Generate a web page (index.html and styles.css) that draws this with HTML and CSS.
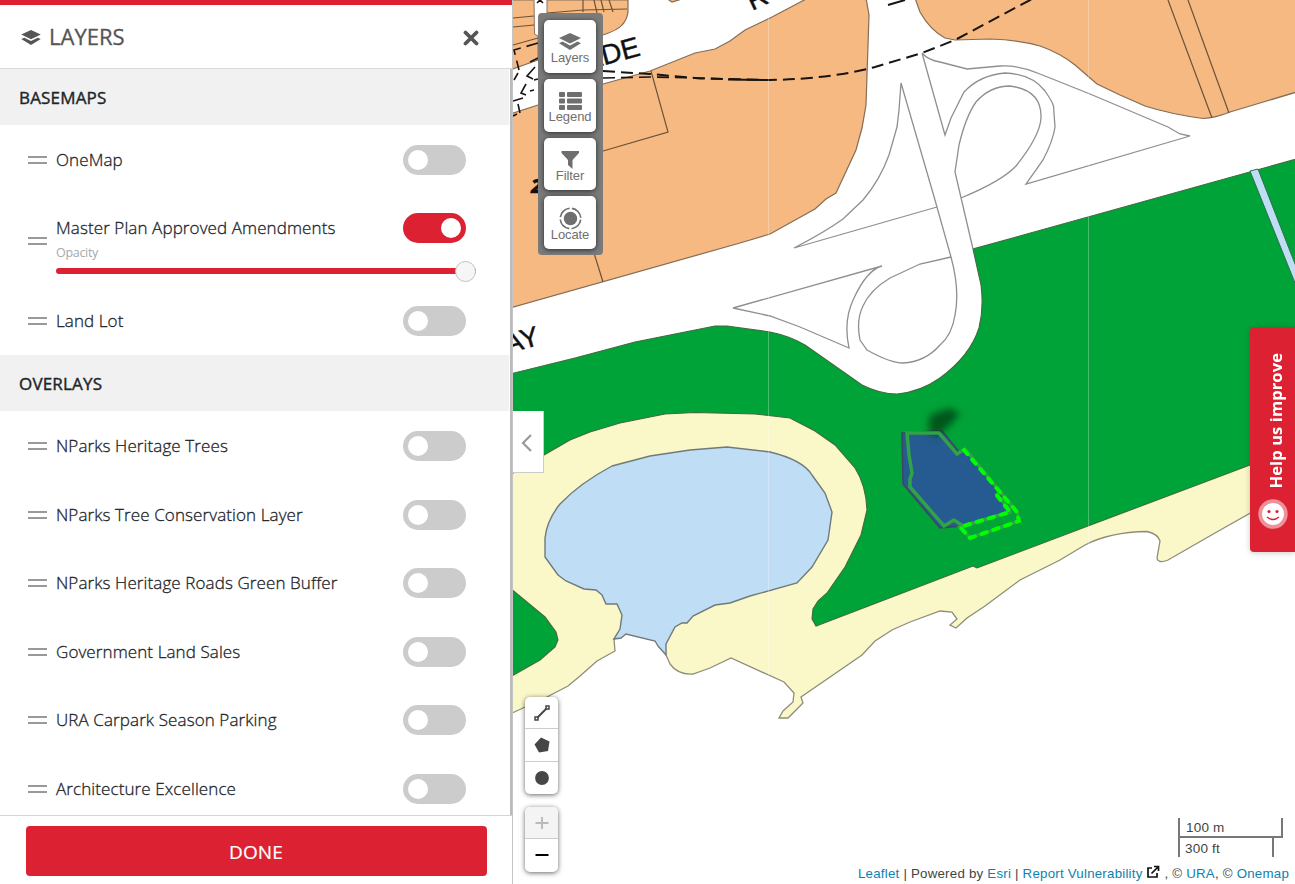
FILE: index.html
```html
<!DOCTYPE html>
<html lang="en">
<head>
<meta charset="utf-8">
<title>Layers</title>
<link rel="stylesheet" href="styles.css">
</head>
<body>
<svg class="defs" width="0" height="0">
  <symbol id="stack" viewBox="0 0 22 18"><path d="M11 0 22 5 11 10.500 0 5Z"/><path d="M0 10.200 3.500 8.600 11 12.500 18.500 8.600 22 10.200 11 17Z"/></symbol>
</svg>
<div class="app">
  <aside class="panel">
    <header class="panel-head">
      <svg class="head-icon"><use href="#stack"/></svg>
      <h1 class="title">LAYERS</h1>
      <svg class="close" viewBox="0 0 16 16"><path d="M2.500 2.500 13.500 13.500M13.500 2.500 2.500 13.500"/></svg>
    </header>
    <div class="list">
      <h2 class="section">BASEMAPS</h2>
      <div class="row"><i class="grip"></i><span class="name">OneMap</span><i class="toggle"></i></div>
      <div class="row tall"><i class="grip"></i>
        <div class="detail">
          <div class="line"><span class="name">Master Plan Approved Amendments</span><i class="toggle on"></i></div>
          <div class="opacity">Opacity</div>
          <div class="slider"><i class="thumb"></i></div>
        </div>
      </div>
      <div class="row"><i class="grip"></i><span class="name">Land Lot</span><i class="toggle"></i></div>
      <h2 class="section">OVERLAYS</h2>
      <div class="row"><i class="grip"></i><span class="name">NParks Heritage Trees</span><i class="toggle"></i></div>
      <div class="row"><i class="grip"></i><span class="name">NParks Tree Conservation Layer</span><i class="toggle"></i></div>
      <div class="row"><i class="grip"></i><span class="name">NParks Heritage Roads Green Buffer</span><i class="toggle"></i></div>
      <div class="row"><i class="grip"></i><span class="name">Government Land Sales</span><i class="toggle"></i></div>
      <div class="row"><i class="grip"></i><span class="name">URA Carpark Season Parking</span><i class="toggle"></i></div>
      <div class="row"><i class="grip"></i><span class="name">Architecture Excellence</span><i class="toggle"></i></div>
    </div>
    <footer class="panel-foot"><button class="done">DONE</button></footer>
  </aside>
  <main class="map">
    <svg class="canvas" viewBox="513 0 782 884">
      <defs><filter id="soft" x="-50%" y="-50%" width="200%" height="200%"><feGaussianBlur stdDeviation="3.500"/></filter></defs>
      <!-- land parcels -->
      <g class="parcel">
        <path d="M510 0H628V12Q627 20 622 25Q618 30 603 35L570 45 538 60 510 70Z"/>
        <path d="M510 114 538 105 603 84 650 71 695 53 715 49 730 41 745 30 772 17 808 -2H866L869 15 866 105 862 128 856 150 836 193 826 199 815 209 770 234 740 243 510 308Z"/>
        <path d="M915 -2 920 12Q930 30 945 38L955 40 990 39Q1020 40 1040 46Q1060 53 1075 65L1097 84 1120 95 1145 106Q1170 114 1203 118.500Q1215 118 1230 112L1260 103 1300 91V-2Z"/>
        <path d="M666 -2 672 2 682 -1Z"/>
      </g>
      <path class="road" d="M534 -2 534.500 34 538 36 538 60H580V40L547 28V-2Z"/>
      <path class="bound" d="M513 18 534 16M513 27 534 25M513 45 538 38M547 13 583 10 627 9M583 -1V12M594 0 597 13M601 0 604 12M609 0 613 12M651 71 668 132 603 151M594 253 603 282M1168 0 1212 118M1188 0 1229 113"/>
      <!-- park and shore -->
      <path class="shore" d="M510 474V714L545 698 568 686 580 676 597 661 615 651 614 639 640 600 666 655 670 664Q678 675 693 674L710 668 731 658 784 682 794 693 793 702 783 711 779 718 788 718 803 703 801 697 862 655 875 641 892 630 910 622 940 611 952 612 957 619 950 625 956 628 967 618 985 606 1020 580 1060 560 1085 545Q1110 532 1147 531.500 1158 534 1160 541L1157 558Q1158 564 1168 560L1215 533 1300 485V400H510Z"/>
      <path class="park" d="M510 374 575 358 635 342 680 333 715 326H727L770 332Q790 336 805 345L862 385Q880 394 897 394Q920 392 940 378Q970 356 979 328Q984 308 981 285L973 249 1300 158V446L1250 465 1080 529 977 568 973 566 892 597 816 626 812 619 813 609 818 601 827 593 845 567 861 535 867 510Q866 485 855 468L835 445 815 431 790 418 755 414 695 412.500 665 414 620 423 590 432 570 440 544 455 510 475Z"/>
      <path class="park" d="M510 588 545 617 556 632 558 640 555 647 540 660 510 677Z"/>
      <path class="water" d="M614 639 620 629 622 615 617 604 606 604 602 595 596 590 584 589 566 581 558 575 545 557V538Q547 520 560 504Q580 483 612 466L650 456 690 450 727 447 770 452Q803 460 812 475L825 493 832 512 828 540 812 567 797 583 750 596 730 603 715 605 693 616 687 623 682 623 675 627 666 644V655L658 646 655 641 626 634 621 638Z"/>
      <path class="mouth" d="M615.500 641 621 639.500 626 636 655 643 658 648 665 657V663H622L616 650Z"/>
      <path class="canal" d="M1250 171 1258 169 1297 269V288Z"/>
      <!-- road kerbs -->
      <g class="kerb">
        <path d="M901 83 899 110 897 127 889 155Q880 180 863 200L843 219Q825 232 794 248L937 207M901 83 935 200 951 257Q960 290 955 315Q952 335 940 345Q925 362 903 363Q890 363 867 350L860 340Q856 320 863 306Q870 290 890 278L920 264 951 257"/>
        <path d="M882 266 733 308 770 316 800 327 849 348Q843 320 854 298Q867 270 882 266Z"/>
        <path d="M922 53 945 135 951 118 964 92Q980 75 1005 73Q1032 74 1045 91Q1052 101 1053.500 106L1055 127Q1053 141 1043 160L1026 184 1190 136 1180 134 1168 127 1090 94 1040 74Q1020 65 1000 66L967 69 940 62Q928 60 922 53"/>
        <path d="M973 249 955 172 959 145Q966 116 976 102Q990 86 1010 86Q1042 90 1041 118Q1040 136 1016 166Q1002 181 961 198"/>
      </g>
      <g class="dashes">
        <path class="tunnel" d="M603 71 650 74 700 78.500 770 80Q830 79 875 67L922 53 955 40 1032 -1"/>
        <path class="tunnel thin" d="M603 78 650 77 700 78 728 79"/>
        <path class="solid" d="M728 79.500 770 80M888 5 905 0"/>
        <path class="tunnel thin" d="M538 43 514 50 519 70M538 58 530 62"/>
        <path class="solid thin" d="M514 80 518 73M535 67 527 76 533 79M538 79 534 80M526 84 521 93 526 95M530 91 534 90M513 101 523 98M518 104 520 113M517 114 513 116"/>
        <path class="solid thin" d="M537 3 540 0 543 3"/>
      </g>
      <g class="labels">
        <text transform="translate(586 70) rotate(-15)">ADE</text>
        <text transform="translate(507 354) rotate(-16)">AY</text>
        <text transform="translate(752 11) rotate(-25)">R</text>
        <text class="num" x="531" y="193">2</text>
      </g>
      <path class="seam" d="M768.500 0V884M1088.500 0V884"/>
      <!-- selected site -->
      <path class="site" d="M902 433 942 430.500 959 452 965 450 1000 494 1009 512 962 526 940 528 903 484Z"/>
      <path class="smudge" filter="url(#soft)" d="M928 426 930 415 950 408 960 414 948 427 934 438Z"/>
      <path class="site-line" d="M963 526 954 520 944 526 910 487V479L912 473 909 455 907 433H939L957 454 965 449 1017 512 1019 521 970 538 960 527 1010 512 1009 509 996 493"/>
      <path class="site-dash" d="M964 450 1017 512 1019 521 970 538 960 527 1010 512 995 493"/>
    </svg>
    <nav class="tools">
      <a class="tool"><svg viewBox="0 0 22 18"><use href="#stack"/></svg><span>Layers</span></a>
      <a class="tool"><svg class="i-legend" viewBox="0 0 23 18"><path d="M1 0h4q1 0 1 1v3q0 1-1 1h-4q-1 0-1-1v-3q0-1 1-1zM9 0h13q1 0 1 1v3q0 1-1 1h-13q-1 0-1-1v-3q0-1 1-1zM1 6.500h4q1 0 1 1v3q0 1-1 1h-4q-1 0-1-1v-3q0-1 1-1zM9 6.500h13q1 0 1 1v3q0 1-1 1h-13q-1 0-1-1v-3q0-1 1-1zM1 13h4q1 0 1 1v3q0 1-1 1h-4q-1 0-1-1v-3q0-1 1-1zM9 13h13q1 0 1 1v3q0 1-1 1h-13q-1 0-1-1v-3q0-1 1-1z"/></svg><span>Legend</span></a>
      <a class="tool"><svg viewBox="0 0 22 18"><path d="M2.500 0H20V2L13.500 9V18L9 14V9L2.500 2Z"/></svg><span>Filter</span></a>
      <a class="tool"><svg class="i-locate" viewBox="0 0 24 24"><circle cx="12" cy="12" r="7"/><circle class="ring" cx="12" cy="12" r="10.700"/></svg><span>Locate</span></a>
    </nav>
    <a class="collapse"><svg viewBox="0 0 12 20"><path d="M10 2 2 10 10 18"/></svg></a>
    <div class="bar draw">
      <a><svg viewBox="0 0 18 18"><path class="ln" d="M4 14 14 4"/><path class="sq" d="M2 13h3v3h-3zM13 2h3v3h-3z"/></svg></a>
      <a><svg viewBox="0 0 18 18"><path d="M8 1.500 16.500 5.500 15 15 6 16.500 1.500 8.500Z"/></svg></a>
      <a><svg viewBox="0 0 18 18"><circle cx="9" cy="9" r="6.900"/></svg></a>
    </div>
    <div class="bar zoom">
      <a class="off"><svg viewBox="0 0 18 18"><path class="pm" d="M2.500 9h13M9 3v12"/></svg></a>
      <a><svg viewBox="0 0 18 18"><path class="pm" d="M2.500 9h13"/></svg></a>
    </div>
    <a class="feedback"><svg viewBox="0 0 30 30"><circle class="halo" cx="15" cy="15" r="14.700"/><circle class="face" cx="15" cy="15" r="11"/><circle class="eye" cx="11" cy="12.500" r="1.600"/><circle class="eye" cx="19" cy="12.500" r="1.600"/><path class="smile" d="M9 18Q15 23 21 18"/></svg><span>Help us improve</span></a>
    <div class="scale"><div class="metric">100 m</div><div class="imperial">300 ft</div></div>
    <div class="credits"><a>Leaflet</a> | Powered by <a>Esri</a> | <a>Report Vulnerability</a> <svg class="ext" viewBox="0 0 14 14"><path d="M6 3H2V12H11V8M8 1.500H12.500V6M12 2 5.500 8.500"/></svg> , © <a>URA</a>, © <a>Onemap</a></div>
  </main>
</div>
</body>
</html>
```
FILE: styles.css
```css
* { box-sizing: border-box; }
body { margin: 0; overflow: hidden; font-family: "Open Sans", "Noto Sans", sans-serif; color: #212529; }
.defs { position: absolute; }
.app { display: flex; width: 1295px; height: 884px; }
h1, h2 { margin: 0; font-weight: 400; }

/* side panel */
.panel { width: 513px; height: 884px; display: flex; flex-direction: column; border-right: 1px solid #c4c4c4; background: #fff; }
.panel-head { height: 69px; flex: none; display: flex; align-items: center; padding: 0 33px 0 21px; border-top: 5px solid #dc2232; border-bottom: 1px solid #d9d9d9; }
.head-icon { width: 20px; height: 16px; fill: #555; margin: 3px 8px 0 0; }
.title { flex: 1; font-size: 22px; letter-spacing: 0; color: #555; font-weight: 400; -webkit-text-stroke: 0.3px #555; line-height: 30px; margin-top: -1px; }
.close { width: 16px; height: 16px; fill: none; stroke: #555; stroke-width: 3.800; stroke-linecap: round; margin-top: 2px; }
.list { flex: none; height: 746px; overflow: hidden; border-right: 2px solid #bbb; padding-right: 1px; }
.section { height: 56px; padding-left: 19px; line-height: 57px; background: #f1f1f1; font-size: 17px; letter-spacing: 0.18px; -webkit-text-stroke: 0.4px #212529; }
.row { height: 68.600px; display: flex; align-items: center; padding: 0 43px 0 28px; }
.tall { height: 93px; }
.grip { width: 19px; height: 8px; border: solid #999; border-width: 2px 0; margin: 1px 9px 0 0; flex: none; }
.name { flex: 1; font-size: 17px; font-weight: 300; white-space: nowrap; letter-spacing: 0.1px; -webkit-text-stroke: 0.3px #212529; }
.toggle { width: 63px; height: 30px; border-radius: 15px; background: #ccc; padding: 5px; flex: none; display: flex; margin-top: 1px; }
.toggle::before { content: ""; width: 20px; height: 20px; border-radius: 50%; background: #fff; }
.on { background: #dc2232; justify-content: flex-end; margin-top: 0; }
.detail { flex: 1; height: 75px; padding-top: 10px; }
.line { display: flex; align-items: center; height: 30px; }
.opacity { font-size: 12.500px; line-height: 18px; color: #a8a8a8; font-weight: 400; letter-spacing: -0.3px; margin-top: 1px; }
.slider { height: 6px; margin-top: 6px; border-radius: 3px; background: #dc2232; display: flex; justify-content: flex-end; align-items: center; margin-right: -10px; }
.thumb { width: 21px; height: 21px; margin-top: 1px; flex: none; border-radius: 50%; background: #f6f6f6; border: 1px solid #c0c0c0; }
.panel-foot { flex: 1; border-top: 1px solid #d4d4d4; padding: 10px 25px 8px 26px; display: flex; }
.done { flex: 1; border: 0; border-radius: 4px; background: #dc2232; color: #fff; font: 400 19px "Open Sans", sans-serif; letter-spacing: 0.1px; padding: 1px 1px 0 0; -webkit-text-stroke: 0.2px #fff; }

/* map */
.map { position: relative; width: 782px; height: 884px; overflow: hidden; font-family: "Liberation Sans", Arial, sans-serif; }
.canvas { display: block; width: 782px; height: 884px; }
.parcel path { fill: #f5b981; stroke: #836d57; stroke-width: 1.200; }
.road { fill: #fff; stroke: #8b7764; }
.bound { fill: none; stroke: #6d5238; stroke-width: 1.200; }
.shore { fill: #faf7c9; stroke: #8e8d7c; stroke-width: 1.300; }
.park { fill: #00a338; stroke: #3f6b3e; stroke-width: 1.100; }
.water { fill: #bfddf5; stroke: #707a7b; stroke-width: 1.400; }
.mouth { fill: #fff; }
.canal { fill: #bfddf5; stroke: #2b7148; }
.kerb { fill: none; stroke: #8f8f8f; stroke-width: 1.300; }
.dashes { fill: none; stroke: #191410; stroke-width: 2; }
.tunnel { stroke-dasharray: 12 6; }
.thin { stroke-width: 1.600; }
.labels { font: 28px "Liberation Sans", sans-serif; fill: #111; stroke: #111; stroke-width: 0.4; }
.num { font-family: "Open Sans", sans-serif; font-weight: 800; font-style: italic; font-size: 20px; }
.seam { stroke: #fff; stroke-opacity: 0.28; }
.site { fill: #255b91; stroke: #3b4860; stroke-width: 1.500; }
.smudge { fill: #053d13; fill-opacity: 0.75; }
.site-line { fill: none; stroke: #2fa346; stroke-width: 3.500; }
.site-dash { fill: none; stroke: #00ff00; stroke-width: 4; stroke-dasharray: 5.500 7; stroke-linecap: round; }

.tools { position: absolute; left: 25px; top: 13px; width: 65px; height: 242px; padding: 7px 7px 6px 6px; border-radius: 4px; background: #7b7b7b; display: flex; flex-direction: column; gap: 6px; }
.tool { flex: 1; border-radius: 5px; background: #fff; box-shadow: 0 1px 5px rgba(0,0,0,.65); color: #6f6f6f; font-size: 13px; letter-spacing: -0.1px; line-height: 15px; display: flex; flex-direction: column; align-items: center; justify-content: flex-end; padding-bottom: 7.500px; }
.tool svg { width: 22px; height: 18px; margin-bottom: -1px; fill: #6f6f6f; }
.tool .i-legend { width: 23px; }
.tool .i-locate { width: 23px; height: 23px; margin-bottom: -3px; }
.ring { fill: none; stroke: #6f6f6f; stroke-width: 1.700; stroke-dasharray: 14.300 2.500; stroke-dashoffset: -1.250; }
.collapse { position: absolute; left: 0; top: 411px; width: 31px; height: 62px; background: #fff; border: solid #ccc; border-width: 0 1px 1px 0; display: flex; align-items: center; padding: 2px 0 0 8px; }
.collapse svg { width: 12px; height: 20px; fill: none; stroke: #999; stroke-width: 2.200; }
.bar { position: absolute; left: 12px; width: 33px; border-radius: 5px; background: #fff; box-shadow: 0 1px 5px rgba(0,0,0,.6); display: flex; flex-direction: column; overflow: hidden; }
.bar a { flex: 1; display: flex; align-items: center; justify-content: center; border-bottom: 1px solid #ccc; }
.bar a:last-child { border-bottom: 0; }
.bar svg { width: 18px; height: 18px; fill: #464646; }
.draw { top: 697px; height: 97px; }
.draw a:first-child { flex: 0 0 32px; }
.zoom { top: 807px; height: 65px; }
.zoom a:last-child { padding-bottom: 1px; }
.zoom .off { flex: 0 0 32px; background: #f4f4f4; }
.pm { stroke: #000; stroke-width: 2; }
.off .pm { stroke: #bbb; }
.ln { stroke: #464646; stroke-width: 2; }
.sq { fill: #fff; stroke: #464646; stroke-width: 1.500; }
.feedback { position: absolute; right: 0; top: 327px; width: 45px; height: 225px; border-radius: 4px 0 0 4px; background: #dc2232; box-shadow: 0 1px 6px rgba(0,0,0,.2); display: flex; flex-direction: column-reverse; align-items: center; padding-bottom: 23px; gap: 11px; }
.feedback svg { width: 30px; height: 30px; flex: none; }
.feedback span { writing-mode: vertical-rl; transform: rotate(180deg); color: #fff; font: 700 16.500px "Open Sans", sans-serif; letter-spacing: 0.100px; white-space: nowrap; margin-left: 6px; }
.halo { fill: #fff; fill-opacity: 0.5; }
.face { fill: #fff; }
.eye { fill: #dc2232; }
.smile { fill: none; stroke: #dc2232; stroke-width: 1.500; }
.scale { position: absolute; left: 665px; top: 818px; width: 105px; font-size: 13.500px; color: #444; letter-spacing: 0.2px; }
.metric { height: 20px; border: 2px solid #777; border-top: 0; line-height: 19px; padding-left: 6px; }
.imperial { height: 20px; width: 96px; margin-top: -1px; border: solid #777; border-width: 1px 2px 0; line-height: 22px; padding-left: 5px; }
.credits { position: absolute; right: 6px; bottom: 1px; font-size: 13.300px; letter-spacing: 0.220px; line-height: 18px; white-space: nowrap; color: #444; }
.credits a { color: #0d82b0; }
.ext { width: 14px; height: 14px; fill: none; stroke: #111; stroke-width: 1.700; vertical-align: -1px; }
```
